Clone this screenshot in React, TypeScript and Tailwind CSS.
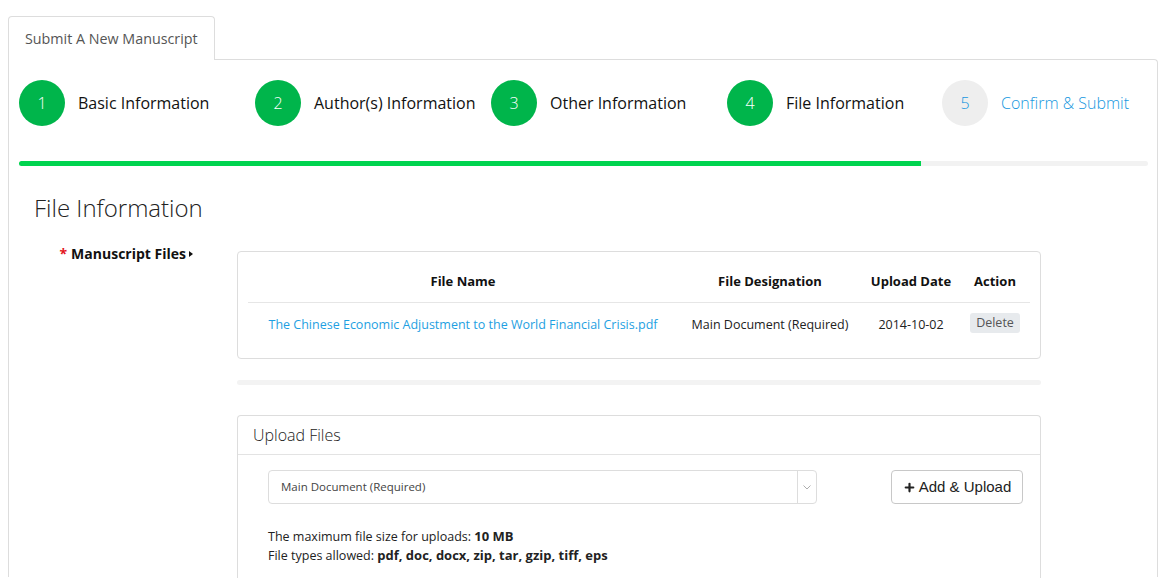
import { Plus } from 'lucide-react'

const steps = [
  { n: 1, label: 'Basic Information', done: true, w: 'w-[236px]' },
  { n: 2, label: 'Author(s) Information', done: true, w: 'w-[236px]' },
  { n: 3, label: 'Other Information', done: true, w: 'w-[236px]' },
  { n: 4, label: 'File Information', done: true, w: 'w-[215px]' },
  { n: 5, label: 'Confirm & Submit', done: false, w: 'flex-1' },
]

export default function App() {
  return (
    <div className="h-[578px] overflow-hidden bg-white pl-2 pt-4 font-['Open_Sans',sans-serif] text-[#333]">
      {/* tab */}
      <div className="relative z-10 -mb-px flex">
        <div className="flex h-[44px] items-center rounded-t-[4px] border border-b-0 border-[#ddd] bg-white px-[16px] text-[14.3px] text-[#555]">
          Submit A New Manuscript
        </div>
      </div>

      <div className="h-[518px] w-[1150px] rounded-tr-[4px] border border-b-0 border-[#ddd] pl-[10px] pr-[9px] pt-[20px]">
        {/* steps */}
        <div className="flex items-center">
          {steps.map((s) => (
            <div key={s.n} className={`flex shrink-0 items-center ${s.w}`}>
              <div
                className={
                  s.done
                    ? 'flex h-[46px] w-[46px] items-center justify-center rounded-full bg-[#00b54b] text-[16px] font-light text-white'
                    : 'flex h-[46px] w-[46px] items-center justify-center rounded-full bg-[#eeeeee] text-[16px] font-light text-[#1697e0]'
                }
              >
                {s.n}
              </div>
              <span
                className={
                  s.done
                    ? 'ml-[13px] whitespace-nowrap text-[16px] text-[#111]'
                    : 'ml-[13px] whitespace-nowrap text-[16px] font-light text-[#1697e0]'
                }
              >
                {s.label}
              </span>
            </div>
          ))}
        </div>

        {/* progress */}
        <div className="mt-[35px] h-[5px] w-full rounded-full bg-[#f2f2f2]">
          <div className="h-[5px] w-[902px] rounded-l-full bg-[#00d44f]" />
        </div>

        <h2 className="mt-[27px] pl-[15px] text-[24px] font-light leading-[30px] text-[#222]">File Information</h2>

        <div className="mt-[21px] flex items-start">
          <div className="flex w-[218px] shrink-0 justify-end pr-[44px]">
            <span className="flex items-center text-[14px] font-bold leading-[20px] text-[#111]">
              <span className="mr-[4px] text-[#e3151c]">*</span>
              Manuscript Files
              <svg width="4" height="6" viewBox="0 0 4 6" className="ml-[3px]">
                <path d="M0 0 L4 3 L0 6 Z" fill="#111" />
              </svg>
            </span>
          </div>

          <div className="w-[804px]">
            {/* files table */}
            <div className="mt-[7px] rounded-[4px] border border-[#ddd] px-[10px] py-[10px]">
              <table className="w-full text-[13px]">
                <thead>
                  <tr className="h-[40px] border-b border-[#e6e6e6] font-bold text-[#111]">
                    <th className="w-[430px] text-center">File Name</th>
                    <th className="w-[184px] text-center">File Designation</th>
                    <th className="w-[98px] text-center">Upload Date</th>
                    <th className="text-center">Action</th>
                  </tr>
                </thead>
                <tbody>
                  <tr className="h-[46px] text-[12.5px]">
                    <td className="text-center text-[#1e9fe2]">
                      The Chinese Economic Adjustment to the World Financial Crisis.pdf
                    </td>
                    <td className="text-center text-[#222]">Main Document (Required)</td>
                    <td className="text-center text-[#222]">2014-10-02</td>
                    <td className="text-center">
                      <span className="relative -top-[2px] inline-block rounded-[3px] bg-[#e7eaed] px-[6px] text-[12.5px] leading-[20px] text-[#555]">
                        Delete
                      </span>
                    </td>
                  </tr>
                </tbody>
              </table>
            </div>

            <div className="mt-[21px] h-[5px] w-full rounded-full bg-[#f3f3f3]" />

            {/* upload */}
            <div className="mt-[30px] h-[200px] rounded-t-[4px] border border-b-0 border-[#ddd]">
              <div className="flex h-[39px] items-center border-b border-[#e3e3e3] px-[15px] text-[16px] font-light text-[#222]">
                Upload Files
              </div>
              <div className="px-[30px] pt-[15px]">
                <div className="flex items-start justify-between">
                  <div className="flex h-[34px] w-[549px] items-center rounded-[4px] border border-[#ddd]">
                    <span className="flex-1 pl-[12px] text-[11.5px] text-[#444]">Main Document (Required)</span>
                    <span className="flex h-full w-[19px] items-center justify-center border-l border-[#ddd]">
                      <svg width="8" height="5" viewBox="0 0 8 5">
                        <path d="M0.5 0.5 L4 4 L7.5 0.5" fill="none" stroke="#999" strokeWidth="0.8" />
                      </svg>
                    </span>
                  </div>
                  <button className="-mr-[13px] flex h-[34px] w-[132px] items-center justify-center gap-[3px] rounded-[4px] border border-[#c8c8c8] bg-white font-['Liberation_Sans',sans-serif] text-[15px] text-[#222]">
                    <Plus size={13} strokeWidth={4} />
                    Add &amp; Upload
                  </button>
                </div>
                <div className="mt-[23px] text-[12.5px] leading-[18px] text-[#222]">
                  <div>
                    The maximum file size for uploads: <b className="text-[13px]">10 MB</b>
                  </div>
                  <div>
                    File types allowed: <b className="text-[13px]">pdf, doc, docx, zip, tar, gzip, tiff, eps</b>
                  </div>
                </div>
              </div>
            </div>
          </div>
        </div>
      </div>
    </div>
  )
}
